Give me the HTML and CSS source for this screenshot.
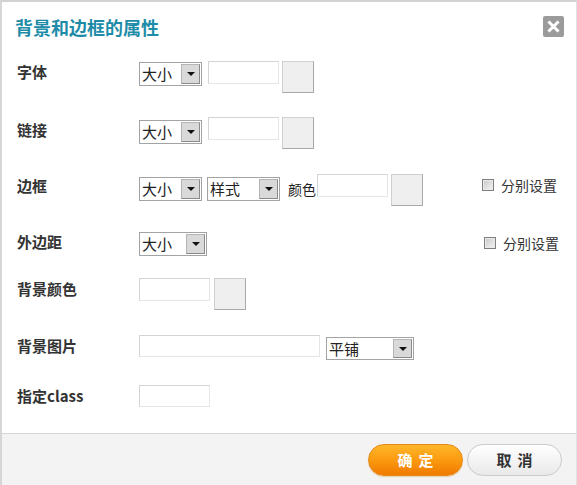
FILE: index.html
```html
<!DOCTYPE html>
<html lang="zh-CN">
<head>
<meta charset="utf-8">
<title>背景和边框的属性</title>
<link rel="stylesheet" href="styles.css">
</head>
<body>
<div class="dialog">
  <div class="header">
    <h1 class="title">背景和边框的属性</h1>
    <span class="close" title="关闭">
      <svg width="21" height="21" viewBox="0 0 21 21"><path d="M6.5 6.5 L14.5 14.5 M14.5 6.5 L6.5 14.5" stroke="#fff" stroke-width="3" stroke-linecap="square"/></svg>
    </span>
  </div>
  <div class="body">
    <div class="row r1">
      <div class="label">字体</div>
      <div class="select s-size"><span class="sel-text">大小</span><span class="arrow"></span></div>
      <div class="input i-color"></div>
      <div class="swatch"></div>
    </div>
    <div class="row r2">
      <div class="label">链接</div>
      <div class="select s-size low"><span class="sel-text">大小</span><span class="arrow"></span></div>
      <div class="input i-color"></div>
      <div class="swatch"></div>
    </div>
    <div class="row r3">
      <div class="label">边框</div>
      <div class="select s-size low"><span class="sel-text">大小</span><span class="arrow"></span></div>
      <div class="select s-style low"><span class="sel-text">样式</span><span class="arrow"></span></div>
      <span class="text-label">颜色</span>
      <div class="input i-color"></div>
      <div class="swatch"></div>
      <label class="split split-a"><input type="checkbox" class="check"><span>分别设置</span></label>
    </div>
    <div class="row r4">
      <div class="label">外边距</div>
      <div class="select s-size wide"><span class="sel-text">大小</span><span class="arrow"></span></div>
      <label class="split split-b"><input type="checkbox" class="check"><span>分别设置</span></label>
    </div>
    <div class="row r5">
      <div class="label">背景颜色</div>
      <div class="input i-color"></div>
      <div class="swatch sw-near"></div>
    </div>
    <div class="row r6">
      <div class="label">背景图片</div>
      <div class="input i-long"></div>
      <div class="select s-repeat"><span class="sel-text">平铺</span><span class="arrow"></span></div>
    </div>
    <div class="row r7">
      <div class="label">指定class</div>
      <div class="input i-color"></div>
    </div>
  </div>
  <div class="footer">
    <button class="btn btn-ok">确定</button>
    <button class="btn btn-cancel">取消</button>
  </div>
</div>
</body>
</html>
```
FILE: styles.css
```css
html, body {
  margin: 0;
  padding: 0;
  width: 577px;
  height: 485px;
  overflow: hidden;
  background: #ffffff;
}

body {
  font-family: "Noto Sans CJK SC", "Microsoft YaHei", "Noto Sans", sans-serif;
  color: #333;
}

.dialog {
  width: 577px;
  height: 485px;
  box-sizing: border-box;
  border-top: 2px solid #d2d2d2;
  border-left: 2px solid #d6d6d6;
  border-right: 1px solid #e2e2e2;
  background: #fff;
  display: flex;
  flex-direction: column;
}

.header {
  height: 59px;
  box-sizing: border-box;
  padding: 12px 12px 0 13px;
  display: flex;
  justify-content: space-between;
  align-items: flex-start;
  flex: none;
}

.title {
  margin: 0;
  font-size: 18px;
  line-height: 26px;
  font-weight: bold;
  color: #1e8ca8;
  letter-spacing: 0;
}

.close {
  width: 21px;
  height: 21px;
  margin-top: 2px;
  background: #9b9b9b;
  border-radius: 2px;
  display: block;
}
.close svg { display: block; }

.body {
  flex: 1;
  padding-left: 15px;
}

.row {
  display: flex;
  align-items: flex-start;
}
.r1 { height: 56px; }
.r2 { height: 57px; }
.r3 { height: 57px; }
.r4 { height: 47px; }
.r5 { height: 57px; }
.r6 { height: 50px; }
.r7 { height: 48px; }

.label {
  width: 122px;
  flex: none;
  font-size: 15px;
  font-weight: bold;
  line-height: 20px;
  margin-top: 1px;
  color: #333;
}
.r2 .label { margin-top: 3px; }
.r3 .label { margin-top: 2px; }

.select {
  height: 24px;
  box-sizing: border-box;
  border: 1px solid #a3a3a3;
  background: #fff;
  display: flex;
  align-items: center;
  justify-content: space-between;
  margin-top: 1px;
  padding-right: 1px;
  flex: none;
}
.select.low { margin-top: 3px; }
.s-size { width: 63px; }
.s-size.wide { width: 68px; }
.s-style { width: 73px; margin-left: 5px; }
.s-repeat { width: 88px; height: 23px; margin-left: 6px; margin-top: 2px; }

.sel-text {
  font-size: 15px;
  line-height: 20px;
  padding-left: 2px;
  color: #222;
}

.arrow {
  width: 19px;
  height: 20px;
  box-sizing: border-box;
  border: 1px solid #8a8a8a;
  border-top-color: #b5b5b5;
  border-left-color: #b5b5b5;
  background: #d9d9d9;
  position: relative;
}
.s-repeat .arrow { height: 19px; }
.arrow::after {
  content: "";
  position: absolute;
  left: 4.5px;
  top: 7px;
  border-left: 4px solid transparent;
  border-right: 4px solid transparent;
  border-top: 4px solid #111;
}

.input {
  height: 23px;
  box-sizing: border-box;
  border: 1px solid #d4d4d4;
  border-bottom-color: #e6e6e6;
  border-right-color: #e6e6e6;
  background: #fff;
  flex: none;
}
.i-color { width: 71px; }
.select + .input { margin-left: 6px; }
.i-long { width: 181px; height: 22px; }
.r7 .input { height: 22px; }

.swatch {
  width: 32px;
  height: 32px;
  box-sizing: border-box;
  margin-left: 3px;
  background: #efefef;
  border: 1px solid #cfcfcf;
  border-right-color: #a9a9a9;
  border-bottom-color: #a9a9a9;
  flex: none;
}
.sw-near { margin-left: 4px; }

.text-label {
  font-size: 14px;
  line-height: 20px;
  margin: 5px 0 0 8px;
  color: #222;
}
.r3 .input { margin-left: 1px; }

.split {
  display: flex;
  align-items: center;
  font-size: 14px;
  line-height: 18px;
  color: #333;
  flex: none;
}
.split-a { margin-left: 59px; margin-top: 2px; }
.split-b { margin-left: 277px; margin-top: 3px; }

.check {
  -webkit-appearance: none;
  appearance: none;
  width: 12px;
  height: 12px;
  margin: 0 7px 0 0;
  box-sizing: border-box;
  border: 1px solid #7f7f7f;
  background: linear-gradient(135deg, #c9c9c9, #f4f4f4);
  box-shadow: inset 0 0 0 1px #eaeaea;
}

.footer {
  height: 52px;
  box-sizing: border-box;
  border-top: 1px solid #d4d4d4;
  background: #f3f3f3;
  display: flex;
  justify-content: flex-end;
  align-items: center;
  gap: 4px;
  padding-right: 14px;
  flex: none;
}

.btn {
  width: 95px;
  height: 32px;
  border-radius: 16px;
  font-family: "Noto Sans CJK SC", "Microsoft YaHei", sans-serif;
  font-size: 15px;
  font-weight: bold;
  letter-spacing: 6px;
  text-indent: 6px;
  padding: 0;
  cursor: pointer;
}

.btn-ok {
  color: #fff;
  border: 1px solid #e68a16;
  background: linear-gradient(#ffb72a, #fb9a10 50%, #f07a00);
  box-shadow: 0 1px 1px rgba(200, 120, 0, 0.3);
}

.btn-cancel {
  color: #333;
  border: 1px solid #cbcbcb;
  background: linear-gradient(#ffffff, #f2f2f2 60%, #e9e9e9);
}
```
